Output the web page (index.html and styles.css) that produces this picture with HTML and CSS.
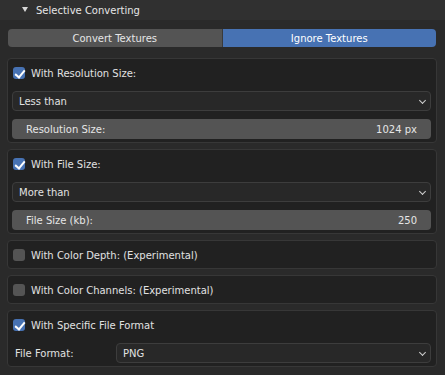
FILE: index.html
```html
<!DOCTYPE html>
<html lang="en">
<head>
    <meta charset="UTF-8">
    <meta name="viewport" content="width=device-width, initial-scale=1.0">
    <title>Selective Converting</title>
    <link rel="stylesheet" href="styles.css">
</head>
<body>
    <div class="panel-header">
        <svg class="arrow" width="6" height="5" viewBox="0 0 6 5"><polygon points="0,0 6,0 3,5" fill="#d8d8d8"/></svg>
        <span>Selective Converting</span>
    </div>
    <div class="content">
        <div class="toggle">
            <div class="toggle-item">Convert Textures</div>
            <div class="toggle-item active">Ignore Textures</div>
        </div>

        <div class="boxes">
            <div class="box">
                <div class="check-row">
                    <span class="checkbox checked"></span>
                    <span>With Resolution Size:</span>
                </div>
                <div class="dropdown">Less than</div>
                <div class="field">
                    <span>Resolution Size:</span>
                    <span>1024 px</span>
                </div>
            </div>

            <div class="box">
                <div class="check-row">
                    <span class="checkbox checked"></span>
                    <span>With File Size:</span>
                </div>
                <div class="dropdown">More than</div>
                <div class="field">
                    <span>File Size (kb):</span>
                    <span>250</span>
                </div>
            </div>

            <div class="box">
                <div class="check-row">
                    <span class="checkbox"></span>
                    <span>With Color Depth: (Experimental)</span>
                </div>
            </div>

            <div class="box">
                <div class="check-row">
                    <span class="checkbox"></span>
                    <span>With Color Channels: (Experimental)</span>
                </div>
            </div>

            <div class="box">
                <div class="check-row">
                    <span class="checkbox checked"></span>
                    <span>With Specific File Format</span>
                </div>
                <div class="prop-row">
                    <span class="prop-label">File Format:</span>
                    <div class="dropdown wide">PNG</div>
                </div>
            </div>
        </div>
    </div>
</body>
</html>
```

FILE: styles.css
```css
* {
    box-sizing: border-box;
}

body, html {
    margin: 0;
    padding: 0;
    background: #2a2a2a;
    width: 445px;
    height: 375px;
    overflow: hidden;
    font-family: "DejaVu Sans", sans-serif;
    font-size: 10px;
    color: #e2e2e2;
}

.panel-header {
    height: 20px;
    background: #303030;
    display: flex;
    align-items: center;
    padding-left: 22px;
    font-size: 10px;
    color: #e6e6e6;
}

.arrow {
    margin-right: 8px;
    margin-top: -1px;
}

.content {
    padding: 9px 8px 0 7px;
}

.toggle {
    display: flex;
    height: 18px;
    margin: 0 1px 11px 1px;
}

.toggle-item {
    flex: 1;
    display: flex;
    align-items: center;
    justify-content: center;
    background: #545454;
    color: #e6e6e6;
}

.toggle-item:first-child {
    border-radius: 4px 0 0 4px;
    border-right: 1px solid #3a3a3a;
}

.toggle-item.active {
    background: #4772b3;
    color: #ffffff;
    border-radius: 0 4px 4px 0;
}

.boxes {
    display: flex;
    flex-direction: column;
    gap: 6px;
}

.box {
    background: #212121;
    border: 1px solid #373737;
    border-radius: 4px;
    padding: 4px 5px 3px 4px;
    display: flex;
    flex-direction: column;
    gap: 8px;
}

.check-row {
    height: 20px;
    display: flex;
    align-items: center;
    gap: 6px;
    padding-left: 1px;
}

.checkbox {
    width: 12px;
    height: 12px;
    border-radius: 3px;
    background: #545454;
    position: relative;
}

.checkbox.checked {
    background: #4772b3;
}

.checkbox.checked::after {
    content: "";
    position: absolute;
    left: 4px;
    top: 1px;
    width: 4px;
    height: 8px;
    border: solid #ffffff;
    border-width: 0 2px 2px 0;
    transform: rotate(40deg);
}

.dropdown {
    height: 20px;
    background: #282828;
    border: 1px solid #3d3d3d;
    border-radius: 4px;
    display: flex;
    align-items: center;
    padding-left: 6px;
    position: relative;
}

.dropdown.wide {
    flex: 1;
}

.dropdown::after {
    content: "";
    position: absolute;
    right: 5px;
    top: 6px;
    width: 4px;
    height: 4px;
    border: solid #d0d0d0;
    border-width: 0 1.5px 1.5px 0;
    transform: rotate(45deg);
}

.field {
    height: 20px;
    background: #545454;
    border-radius: 4px;
    display: flex;
    align-items: center;
    justify-content: space-between;
    padding: 0 14px;
    color: #e6e6e6;
}

.prop-row {
    display: flex;
    align-items: center;
    height: 20px;
}

.prop-label {
    width: 104px;
    padding-left: 3px;
}
```
